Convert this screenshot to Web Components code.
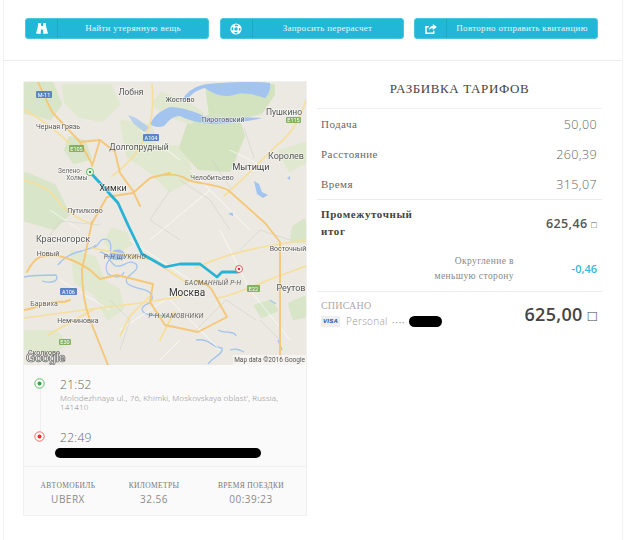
<!DOCTYPE html>
<html lang="ru">
<head>
<meta charset="utf-8">
<title>Поездка</title>
<style>
  html, body { margin: 0; background: #fff; }
  body { font-family: "Liberation Serif", serif; color: #555; }
  .tofu { font: 300 9px "DejaVu Sans", sans-serif; }
</style>
</head>
<body>
<trip-page>
  <action-button slot="actions" icon="binoculars">Найти утерянную вещь</action-button>
  <action-button slot="actions" icon="lifering">Запросить перерасчет</action-button>
  <action-button slot="actions" icon="share">Повторно отправить квитанцию</action-button>

  <trip-card slot="left">
    <trip-map slot="map"></trip-map>
    <trip-stop slot="stops" time="21:52" kind="start">Molodezhnaya ul., 76, Khimki, Moskovskaya oblast', Russia, 141410</trip-stop>
    <trip-stop slot="stops" time="22:49" kind="end"><redact-bar style="width:206px;margin:2px 0 0 -5px"></redact-bar></trip-stop>
    <trip-stat slot="stats" label="АВТОМОБИЛЬ">UBERX</trip-stat>
    <trip-stat slot="stats" label="КИЛОМЕТРЫ">32.56</trip-stat>
    <trip-stat slot="stats" label="ВРЕМЯ ПОЕЗДКИ">00:39:23</trip-stat>
  </trip-card>

  <fare-table slot="right">
    <fare-row label="Подача">50,00</fare-row>
    <fare-row label="Расстояние">260,39</fare-row>
    <fare-row label="Время">315,07</fare-row>
    <fare-row kind="subtotal" label="Промежуточный итог">625,46 <span class="tofu">□</span></fare-row>
    <fare-row kind="rounding" label="Округление в меньшую сторону">-0,46</fare-row>
    <fare-charge></fare-charge>
  </fare-table>
</trip-page>

<script>
const ICONS = {
  binoculars: '<svg width="12" height="11" viewBox="0 0 12 11"><path fill="#fff" d="M2.200 0h2.600l.3 3h1.800l.3-3h2.600l.3 3.400L12 10.500 7.400 11 7 6.500H5L4.600 11 0 10.500 1.900 3.400z"/></svg>',
  lifering: '<svg width="12" height="12" viewBox="0 0 12 12"><circle cx="6" cy="6" r="5.600" fill="#fff"/><circle cx="6" cy="6" r="3.700" fill="none" stroke="#22b7d6" stroke-width="1.500" stroke-dasharray="3 2.810" stroke-dashoffset="1.500"/><circle cx="6" cy="6" r="1.700" fill="#22b7d6"/></svg>',
  share: '<svg width="12" height="10" viewBox="0 0 13 11"><path fill="none" stroke="#fff" stroke-width="1.600" d="M9.500 7.500v2.700H1V3h3"/><path fill="#fff" d="M8.500 0L13 3.300 8.500 6.600V4.800C6.600 4.800 5.200 5.300 4.300 7 4.300 4.200 6 2.200 8.500 2z"/></svg>'
};

class TripPage extends HTMLElement {
  constructor() {
    super();
    this.attachShadow({ mode: 'open' });
    this.shadowRoot.innerHTML = `
      <style>
        :host { display: block; width: 620px; height: 540px; margin-left: 3px; box-sizing: border-box;
                border-left: 1px solid #f0f0f0; border-right: 1px solid #f2f2f2; }
        .actions { display: flex; gap: 10.5px; padding: 18px 24px 21px 21px; border-bottom: 1px solid #ececec; }
        .body { display: grid; grid-template-columns: 282px 285px; column-gap: 11px; padding: 21px 0 0 20px; }
      </style>
      <div class="actions"><slot name="actions"></slot></div>
      <div class="body"><slot name="left"></slot><slot name="right"></slot></div>
    `;
  }
}
customElements.define('trip-page', TripPage);

class ActionButton extends HTMLElement {
  constructor() {
    super();
    this.attachShadow({ mode: 'open' });
    this.shadowRoot.innerHTML = `
      <style>
        :host { display: flex; flex: 1; height: 21px; box-sizing: border-box; background: #22b7d6;
                border: 1px solid #4cc6e0; border-radius: 3px; color: #e6f7fb;
                font: 9px "Liberation Serif", serif; letter-spacing: .3px; }
        .icon { display: flex; align-items: center; justify-content: center; width: 31px; border-right: 1px solid #1ea6c3; }
        .label { flex: 1; display: flex; align-items: center; justify-content: center; padding-bottom: 1px; white-space: nowrap; }
      </style>
      <span class="icon">${ICONS[this.getAttribute('icon')]}</span>
      <span class="label"><slot></slot></span>
    `;
  }
}
customElements.define('action-button', ActionButton);

class TripCard extends HTMLElement {
  constructor() {
    super();
    this.attachShadow({ mode: 'open' });
    this.shadowRoot.innerHTML = `
      <style>
        :host { display: block; height: 433px; background: #fafafa; box-shadow: 0 0 0 1px #f1f1f1; }
        .stops { display: block; height: 89px; padding-top: 12px; border-bottom: 1px solid #f0f0f0; position: relative; }
        .rail { position: absolute; left: 15.500px; top: 24px; height: 44px; border-left: 1px solid #eee; }
        .stats { display: grid; grid-template-columns: 88px 84px 110px; padding-top: 13px; }
      </style>
      <slot name="map"></slot>
      <div class="stops"><span class="rail"></span><slot name="stops"></slot></div>
      <div class="stats"><slot name="stats"></slot></div>
    `;
  }
}
customElements.define('trip-card', TripCard);

class TripMap extends HTMLElement {
  constructor() {
    super();
    this.attachShadow({ mode: 'open' });
    const labels = [
      [131,95,'Лобня',8.500,'#555'],[180,102,'Жостово',7,'#444'],[223,122,'Пироговский',7,'#555'],
      [284,115,'Пушкино',8.500,'#555'],[58,129,'Черная Грязь',7,'#555'],[139,150,'Долгопрудный',8.500,'#555'],
      [286,159,'Королев',9,'#555'],[251,170,'Мытищи',9,'#444'],[212,180,'Челобитьево',7,'#555'],
      [70,173,'Зелено-',6.500,'#666'],[77,180,'Холмы',6.500,'#666'],[113,191,'Химки',9,'#333'],
      [85,213,'Путилково',7,'#555'],[63,242,'Красногорск',9,'#555'],[48,256,'Новый',7,'#555'],
      [44,306,'Барвиха',7,'#666'],[78,323,'Немчиновка',7,'#555'],[288,251,'Восточный',7,'#555'],
      [291,291,'Реутов',9,'#555'],[187,296,'Москва',10,'#333']
    ];
    const shields = [
      [36,91,16,7,'М-11','#5b85c4'],[143,134,16,7,'А104','#5b85c4'],[69,145,15,7,'Е105','#83b25e'],
      [286,117,15,6,'Е115','#83b25e'],[60,288,17,7,'А106','#5b85c4'],[59,339,12,6,'Е30','#83b25e'],[247,285,13,7,'Е22','#83b25e']
    ];
    const text = labels.map(([x, y, t, s, c]) =>
      `<text x="${x}" y="${y}" font-size="${s}" fill="${c}" text-anchor="middle">${t}</text>`).join('');
    const signs = shields.map(([x, y, w, h, t, c]) =>
      `<rect x="${x}" y="${y}" width="${w}" height="${h}" rx="1" fill="${c}"/><text x="${x + w / 2}" y="${y + h - 1.500}" font-size="5.500" fill="#fff" text-anchor="middle">${t}</text>`).join('');
    this.shadowRoot.innerHTML = `
      <style>
        :host { display: block; height: 283px; overflow: hidden; }
        svg { display: block; filter: blur(.45px); font-family: Roboto, "Liberation Sans", sans-serif; }
      </style>
      <svg width="282" height="283" viewBox="24 82 282 283">
        <rect x="24" y="82" width="282" height="283" fill="#ece9e2"/>
        <g fill="#d9e5c8" stroke="#d9e5c8" stroke-width="4" stroke-linejoin="round">
          <path d="M26 84h26l8 20-10 14-24-6z"/>
          <path d="M64 86h46l8 18-16 16-22-4-14-14z" fill="#e0e8d0" stroke="#e0e8d0"/>
          <path d="M122 122l28 4 8 20 26 2 8 30-22 12-18-18-24-16z" fill="#e0e8d0" stroke="#e0e8d0"/>
          <path d="M207 86h66v8l-12 18-24 6 6 18-14 34-30-2-18-20 8-24 22-8z" fill="#d3e2bf" stroke="#d3e2bf"/>
          <path d="M26 174l28 12 14 28-14 14-28-8z"/>
          <path d="M70 138l14 4 6 16-16 4-8-12z"/>
          <path d="M162 94l26 10 14 10-12 8-24-8-12-10z" fill="#e0e8d0" stroke="#e0e8d0"/>
          <path d="M280 152l24-8v18l-14 8z" fill="#e0e8d0" stroke="#e0e8d0"/>
          <path d="M294 227l10-6v20h-12z"/>
          <path d="M72 252l22 6 10 24 14 8 4 18-14 10-12-24-20-12z" fill="#e0e8d0" stroke="#e0e8d0"/>
          <path d="M26 332h30l10 12-14 8-26-4z" fill="#e0e8d0" stroke="#e0e8d0"/>
          <path d="M256 306l14-4 6 8-14 6z"/>
          <path d="M290 304l14-6v18l-10 2z"/>
          <path d="M112 230l14 4 4 10-16 8-8-10z" fill="#e0e8d0" stroke="#e0e8d0"/>
        </g>

        <g fill="#a3c4ef">
          <path d="M208 84c20-2 50-3 62-1 1 6-2 13-5 15-12-4-22-6-31-3-12 3-22-2-29-7-8 2-14 6-18 12l-4-1c4-8 14-14 25-15z"/>
          <path d="M150 124c4-8 8-12 20-17 10 0 24 4 34 9 10 4 36 0 58 2-14 4-32 5-46 6-16 0-28-4-36-8-8 0-12 6-16 10-6 2-10 1-14-2z"/>
          <path d="M254 181l5 3 3 8 6 3-5 3-6-4z"/>
          <path d="M228 214l5-2v4zM287 178l3-2v4z"/>
          <path d="M128 115l8 3 14 10-6 4-10-8z" opacity=".7"/>
        </g>
        <g fill="none" stroke="#a3c4ef" stroke-width="1.300">
          <path d="M24 277c10-2 22-2 32-2 4 8-8 8-14 6M58 265c6-8 14-12 24-14 4-2 10-2 14-6M92 248c8 0 6-12 16-8 6 4 0 10 4 16"/>
          <path d="M100 252c8 0 10 12 16 14 8 2 12-8 20-2 6 8-16 12-8 20 8 6 22 4 24 12 2 10-10 6-10 14 4 8 18 4 26 6"/>
          <path d="M124 258c-12-6-22 6-16 16 6 4 14 4 16-2"/>
          <path d="M196 340c14-2 16 8 26 8 2 6-10 10-14 16M218 330c6 4 16 0 18 6"/>
          <path d="M230 350c6-2 10 0 14 2M278 340l4 10M270 300l6 4"/>
        </g>
        <path d="M114 250c8-2 12 2 10 8-6 4-14 2-16-2z" fill="#a3c4ef"/>

        <g fill="none" stroke="#fff" stroke-width=".8" opacity=".8">
          <path d="M190 170l60 60M210 190l-60 50M130 240l60 40M170 300l50 50M120 330l60-40M220 230l30 60M250 290l40 50M60 280l50 30M140 130l40 30M50 210l30 20M230 150l40 20M180 340l-20 20"/>
        </g>
        <g fill="none" stroke="#cfcbc1" stroke-width=".5">
          <path d="M180 180l30 20 20 30M196 330l30-30 30 20M170 190l-20 30 30 20M212 160l20 30M110 300l20 20-10 30M240 250l20-20 30 10M260 320l20 20M244 128l10 30M100 225l-40-4-10 14"/>
        </g>

        <g fill="none" stroke="#f6df9b" stroke-width="1.700" stroke-linecap="round">
          <path d="M24 110c20 10 34 22 46 34M24 180c16 4 28 10 36 24 10 10 20 16 32 20"/>
          <path d="M152 84c2 20 0 40-8 56-6 12-20 28-32 36"/>
          <path d="M306 100c-6 20-16 36-30 46-16 16-36 36-52 50"/>
          <path d="M196 268c20-10 50-18 72-22l38-6"/>
          <path d="M218 298c20-4 44-16 66-24l22-8"/>
          <path d="M24 318c30-4 60-8 90-12 24-2 46-6 68-10M92 248l60 12 34 22M150 296l-20 20-10 20M160 340l14-28"/>
          <path d="M48 335l46-26"/>
        </g>
        <g fill="none" stroke="#f4c878" stroke-width="1.900" stroke-linecap="round" stroke-linejoin="round">
          <path d="M38 82l14 30 28 30 12 22M80 142l20-2 15 12 5 21 13 18 7 15"/>
          <path d="M100 140l-8 26"/>
          <path d="M170 173l-20 5-17 15-26 4-15 26"/>
          <path d="M165 175c8-1 16 0 23 5 12 4 28 4 40 10l37 33 15 19v58l0 55"/>
          <path d="M27 272c4-8 8-13 13-15 8-2 16-2 23 0 10 3 20 8 27 13l10 9 17-4 36 9"/>
          <path d="M92 222l-10 48c0 20 2 34 8 50l18 45"/>
          <path d="M153 284l-3 18 15 23 33 7 29-15-15-27c-4-6-10-8-16-9"/>
          <path d="M24 310c14-2 24-10 40-8l6-2"/>
        </g>

        <path d="M90 172l28 31 10 22 14 29 23 13 15-3h20l17 13 5-5h16" fill="none" stroke="#27b3d6" stroke-width="2.800" stroke-linejoin="round" stroke-linecap="round"/>

        <circle cx="90" cy="172" r="3.500" fill="#fff" stroke="#55b55a"/>
        <circle cx="90" cy="172" r="1.300" fill="#2c9a35"/>
        <circle cx="239" cy="269" r="3.500" fill="#fff" stroke="#e25a55"/>
        <circle cx="239" cy="269" r="1.300" fill="#d8322c"/>

        ${signs}
        <g stroke="#fff" stroke-width="1.500" paint-order="stroke" stroke-opacity=".6" style="stroke-linejoin:round">${text}</g>
        <g font-style="italic" font-size="6.500" fill="#666" text-anchor="middle" letter-spacing=".3">
          <text x="125" y="259">Р-Н ЩУКИНО</text>
          <text x="213" y="285">БАСМАННЫЙ Р-Н</text>
          <text x="176" y="318">Р-Н ХАМОВНИКИ</text>
        </g>
        <text x="28" y="355" font-size="7" fill="#555">Сколково</text>
        <text x="26" y="362" font-size="12" font-weight="700" fill="#eee" stroke="#666" stroke-width=".7" font-family="Liberation Sans" letter-spacing="-.4">Google</text>
        <rect x="233" y="355" width="73" height="10" fill="#fff" opacity=".5"/>
        <text x="305" y="362" font-size="6.500" fill="#555" text-anchor="end">Map data ©2016 Google</text>
      </svg>
    `;
  }
}
customElements.define('trip-map', TripMap);

class TripStop extends HTMLElement {
  constructor() {
    super();
    this.attachShadow({ mode: 'open' });
    const end = this.getAttribute('kind') === 'end';
    const dark = end ? '#e2332d' : '#31a636';
    const ring = end ? '#ea6d68' : '#5dba61';
    this.shadowRoot.innerHTML = `
      <style>
        :host { display: grid; grid-template-columns: 36px 1fr; height: ${end ? 'auto' : '53px'}; position: relative; z-index: 1; }
        .dot { display: flex; justify-content: flex-end; padding-right: 15px; padding-top: 1px; }
        .time { font: 300 12px/15px "Open Sans", sans-serif; color: #666; letter-spacing: .3px; }
        .text { font: 300 8px/9px "Open Sans", sans-serif; color: #888; letter-spacing: .16px; padding-top: 1px; }
      </style>
      <div class="dot"><svg width="11" height="11" viewBox="0 0 11 11"><circle cx="5.500" cy="5.500" r="4.700" fill="#fff" stroke="${ring}"/><circle cx="5.500" cy="5.500" r="2" fill="${dark}"/></svg></div>
      <div>
        <div class="time">${this.getAttribute('time')}</div>
        <div class="text"><slot></slot></div>
      </div>
    `;
  }
}
customElements.define('trip-stop', TripStop);

class RedactBar extends HTMLElement {
  constructor() {
    super();
    this.attachShadow({ mode: 'open' });
    this.shadowRoot.innerHTML = `
      <style>
        :host { display: block; height: 10px; background: #000; border-radius: 5px; }
      </style>
    `;
  }
}
customElements.define('redact-bar', RedactBar);

class TripStat extends HTMLElement {
  constructor() {
    super();
    this.attachShadow({ mode: 'open' });
    this.shadowRoot.innerHTML = `
      <style>
        :host { display: block; text-align: center; }
        .label { font: 7.500px/12px "Liberation Serif", serif; color: #777; letter-spacing: .35px; white-space: nowrap; }
        .value { font: 400 10px/14px "Open Sans", sans-serif; color: #8a8a8a; letter-spacing: .5px; }
      </style>
      <div class="label">${this.getAttribute('label')}</div>
      <div class="value"><slot></slot></div>
    `;
  }
}
customElements.define('trip-stat', TripStat);

class FareTable extends HTMLElement {
  constructor() {
    super();
    this.attachShadow({ mode: 'open' });
    this.shadowRoot.innerHTML = `
      <style>
        :host { display: block; }
        h2 { margin: 0; height: 26px; font: 400 13px/14px "Liberation Serif", serif; letter-spacing: .6px; color: #444;
             text-align: center; border-bottom: 1px solid #f0f0f0; }
      </style>
      <h2>РАЗБИВКА ТАРИФОВ</h2>
      <slot></slot>
    `;
  }
}
customElements.define('fare-table', FareTable);

class FareRow extends HTMLElement {
  constructor() {
    super();
    this.attachShadow({ mode: 'open' });
    this.shadowRoot.innerHTML = `
      <style>
        :host { display: grid; grid-template-columns: 1fr auto; align-items: center; height: 30px;
                padding: 0 5px 0 4px; font: 11px "Liberation Serif", serif; letter-spacing: .45px; color: #666; }
        .value { font: 300 12.500px "Open Sans", sans-serif; letter-spacing: .4px; color: #666; }
        :host([kind="subtotal"]) { height: 46px; border-top: 1px solid #ececec; font-weight: 700; color: #444; line-height: 17px; }
        :host([kind="subtotal"]) .label { width: 100px; letter-spacing: .6px; }
        :host([kind="subtotal"]) .value { font-weight: 600; font-size: 12.500px; color: #555; }
        :host([kind="rounding"]) { height: 45px; border-bottom: 1px solid #ececec; font-size: 9.500px; color: #888; line-height: 15px; grid-template-columns: 193px 1fr; }
        :host([kind="rounding"]) .label { text-align: right; padding-left: 100px; letter-spacing: .4px; }
        :host([kind="rounding"]) .value { font-weight: 600; font-size: 11px; color: #35b8d8; text-align: right; letter-spacing: 0; }
      </style>
      <div class="label">${this.getAttribute('label')}</div>
      <div class="value"><slot></slot></div>
    `;
  }
}
customElements.define('fare-row', FareRow);

class FareCharge extends HTMLElement {
  constructor() {
    super();
    this.attachShadow({ mode: 'open' });
    this.shadowRoot.innerHTML = `
      <style>
        :host { display: grid; grid-template-columns: 1fr auto; align-items: center; padding: 8px 5px 0 4px; }
        .title { font: 10px/12px "Liberation Serif", serif; color: #aaa; letter-spacing: .2px; }
        .card { display: flex; align-items: center; height: 14px; margin-top: 2px; font: 300 10px "Open Sans", sans-serif; color: #999; letter-spacing: .3px; }
        .visa { width: 19px; height: 11px; margin-right: 6px; background: #eee; color: #1c4f96; font: italic 700 6px/11px "Liberation Sans", sans-serif; text-align: center; }
        .dots { margin-left: 4px; margin-right: 4px; font-size: 8px; letter-spacing: .4px; }
        .total { font: 600 18px "Open Sans", sans-serif; color: #444; letter-spacing: .3px; }
        .tofu { font: 300 15px "DejaVu Sans", sans-serif; }
        redact-bar { width: 33px; height: 11px; border-radius: 6px; }
      </style>
      <div>
        <div class="title">СПИСАНО</div>
        <div class="card"><span class="visa">VISA</span>Personal<span class="dots">••••</span><redact-bar></redact-bar></div>
      </div>
      <div class="total">625,00 <span class="tofu">□</span></div>
    `;
  }
}
customElements.define('fare-charge', FareCharge);
</script>
</body>
</html>
